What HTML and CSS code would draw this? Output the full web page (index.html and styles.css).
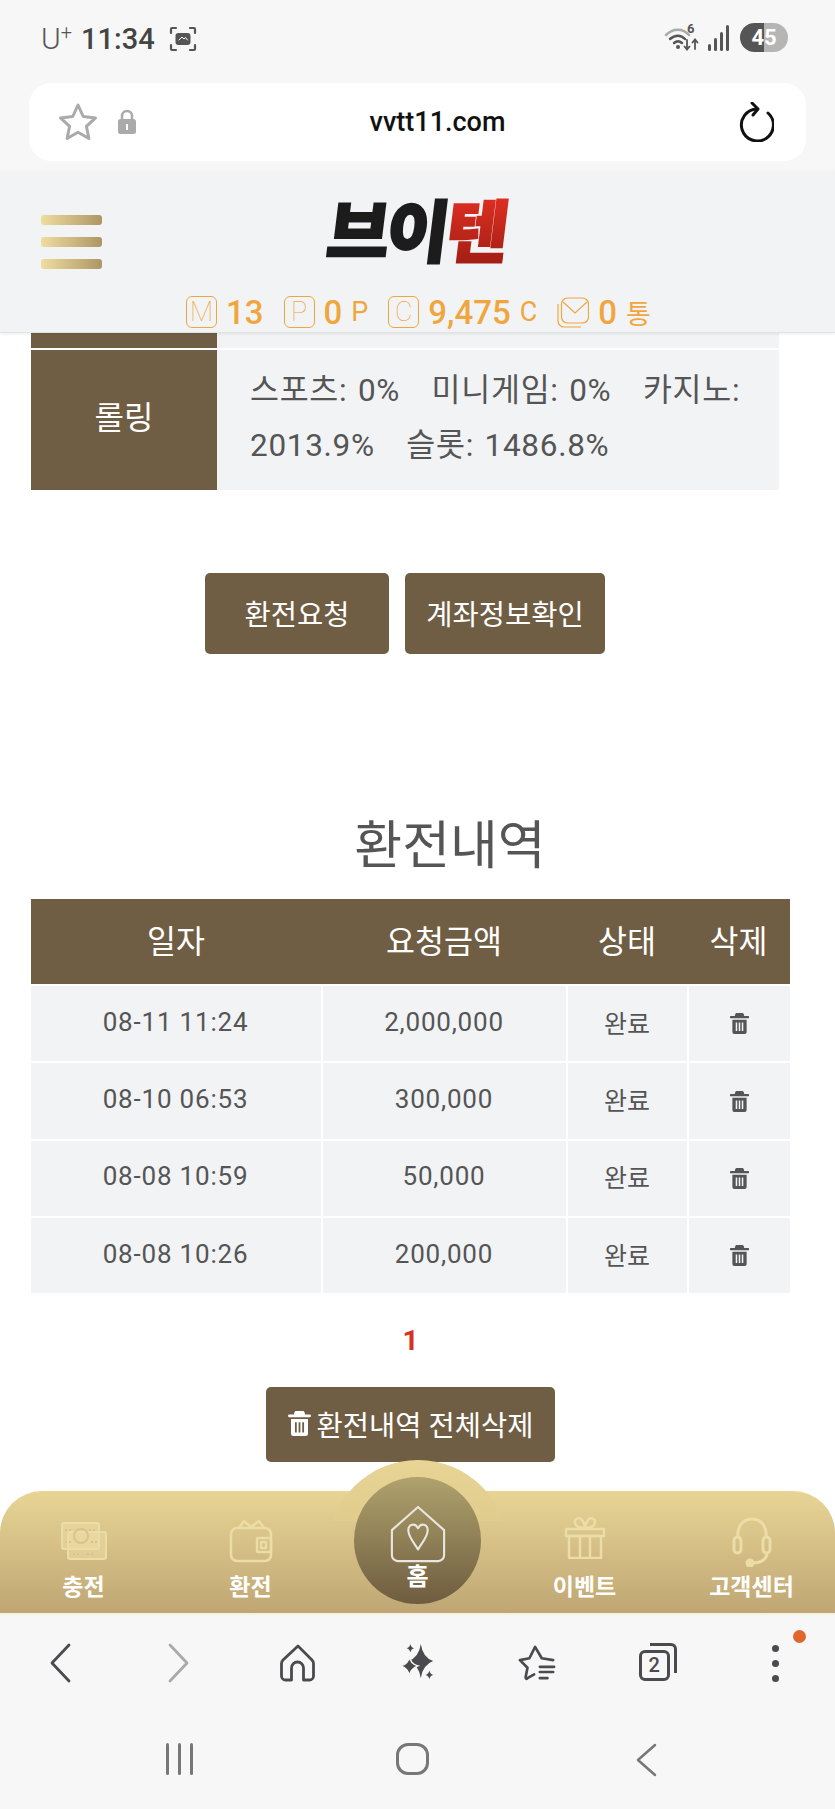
FILE: index.html
```html
<!DOCTYPE html>
<html lang="ko">
<head>
  <meta charset="UTF-8" />
  <title>브이텐 | 환전</title>
  <link rel="stylesheet" href="styles.css">
</head>
<body>

  <div class="statusbar">
    <div class="status-left">
      <span class="carrier">U<sup>+</sup></span>
      <span class="clock">11:34</span>
      <svg class="shot" viewBox="0 0 28 26" fill="none" stroke="#555" stroke-width="2.200" stroke-linecap="round">
        <path d="M2 7V3a1 1 0 0 1 1-1h4M21 2h4a1 1 0 0 1 1 1v4M26 19v4a1 1 0 0 1-1 1h-4M7 24H3a1 1 0 0 1-1-1v-4"/>
        <rect x="6.500" y="7" width="15" height="12" rx="3" fill="#555" stroke="none"/>
        <path d="M10 14l3-3 2 2 1.500-1.500 2 2.500" stroke="#fff" stroke-width="1"/>
      </svg>
    </div>
    <div class="status-right">
      <svg class="wifi" viewBox="0 0 36 26" fill="none" stroke-linecap="round">
        <path d="M2 10c7-7 17-7 23 0" stroke="#aaa" stroke-width="2.500"/>
        <path d="M6 14c5-4.500 11-4.500 15 0" stroke="#555" stroke-width="2.500"/>
        <path d="M10 18c3-2.500 5-2.500 8 0" stroke="#555" stroke-width="2.500"/>
        <circle cx="14" cy="22" r="2" fill="#555"/>
        <path d="M23 15v9M20.500 21.500l2.500 3 2.500-3M31 24v-9M28.500 17.500l2.500-3 2.500 3" stroke="#555" stroke-width="1.800"/>
      </svg>
      <span class="wifi-six">6</span>
      <svg class="signal" viewBox="0 0 22 26" fill="#555">
        <rect x="0" y="19" width="3" height="7" rx="1.500"/>
        <rect x="6" y="13" width="3" height="13" rx="1.500"/>
        <rect x="12" y="7" width="3" height="19" rx="1.500"/>
        <rect x="18" y="0" width="3" height="26" rx="1.500"/>
      </svg>
      <span class="battery">45</span>
    </div>
  </div>

  <div class="urlbar-wrap">
    <div class="urlbar">
      <svg class="url-star" viewBox="0 0 40 40" fill="none" stroke="#aaa" stroke-width="3" stroke-linejoin="round">
        <path d="M20 3l5.200 11.500 12.300 1.400-9.100 8.400 2.500 12.200L20 30.300 9.100 36.500l2.500-12.200-9.100-8.400 12.300-1.400z"/>
      </svg>
      <svg class="url-lock" viewBox="0 0 20 26" fill="#aaa">
        <path d="M5 11V7a5 5 0 0 1 10 0v4" fill="none" stroke="#aaa" stroke-width="2.500"/>
        <rect x="1" y="10" width="18" height="15" rx="2.500"/>
        <rect x="9" y="15" width="2" height="6" fill="#fff"/>
      </svg>
      <span class="url-text">vvtt11.com</span>
      <svg class="url-reload" viewBox="0 0 36 40" fill="none" stroke="#111" stroke-width="3" stroke-linecap="round" stroke-linejoin="round">
        <path d="M19 7A16 16 0 1 0 30 11"/>
        <path d="M14 1l6 6-5 6"/>
      </svg>
    </div>
  </div>

  <div class="header">
    <div class="header-top">
      <div class="burger"><i></i><i></i><i></i></div>
      <div class="logo">브이<span>텐</span></div>
    </div>
    <div class="stats">
      <span class="stat-box">M</span><b class="stat-num">13</b>
      <span class="stat-box stat-gap">P</span><b class="stat-num">0</b><span class="stat-unit">P</span>
      <span class="stat-box stat-gap">C</span><b class="stat-num">9,475</b><span class="stat-unit">C</span>
      <svg class="stat-mail" viewBox="0 0 32 32" fill="none" stroke="#f0a63f" stroke-width="1.200">
        <rect x="4.500" y="2" width="27" height="25" rx="6"/>
        <path d="M6 6l12 11L30 6"/>
        <path d="M1 8v17a6 6 0 0 0 6 6h17"/>
      </svg>
      <b class="stat-num">0</b><span class="stat-unit">통</span>
    </div>
  </div>

  <div class="main">
    <table class="info">
      <tr class="info-cut"><th></th><td></td></tr>
      <tr>
        <th>롤링</th>
        <td>스포츠: 0% &nbsp; 미니게임: 0% &nbsp; 카지노: 2013.9% &nbsp; 슬롯: 1486.8%</td>
      </tr>
    </table>

    <div class="actions">
      <a class="btn btn-request">환전요청</a>
      <a class="btn btn-account">계좌정보확인</a>
    </div>

    <h2>환전내역</h2>

    <table class="history">
      <thead>
        <tr><th class="c-date">일자</th><th class="c-amount">요청금액</th><th class="c-state">상태</th><th class="c-del">삭제</th></tr>
      </thead>
      <tbody>
        <tr>
          <td>08-11 11:24</td><td>2,000,000</td><td class="state">완료</td>
          <td><svg class="trash" viewBox="0 0 20 22"><use href="#trash"/></svg></td>
        </tr>
        <tr>
          <td>08-10 06:53</td><td>300,000</td><td class="state">완료</td>
          <td><svg class="trash" viewBox="0 0 20 22"><use href="#trash"/></svg></td>
        </tr>
        <tr>
          <td>08-08 10:59</td><td>50,000</td><td class="state">완료</td>
          <td><svg class="trash" viewBox="0 0 20 22"><use href="#trash"/></svg></td>
        </tr>
        <tr>
          <td>08-08 10:26</td><td>200,000</td><td class="state">완료</td>
          <td><svg class="trash" viewBox="0 0 20 22"><use href="#trash"/></svg></td>
        </tr>
      </tbody>
    </table>

    <div class="pager">1</div>

    <a class="btn btn-clear">
      <svg class="trash-white" viewBox="0 0 20 22"><use href="#trash"/></svg>
      환전내역 전체삭제
    </a>
  </div>

  <div class="tabbar">
    <div class="tab-bump"></div>
    <div class="tab">
      <svg class="icon-money" viewBox="0 0 46 38" fill="none" stroke="#ecdca6" stroke-width="2">
        <rect x="1" y="1" width="37" height="26" rx="2" fill="#ecdca6" fill-opacity="0.55"/>
        <rect x="7" y="10" width="38" height="27" rx="2" fill="#ecdca6" fill-opacity="0.55"/>
        <circle cx="20" cy="14" r="7" stroke="#d8c488"/>
        <path d="M4 8h6M28 8h6M4 20h6M30 20h6M12 32h7M26 32h8" stroke="#d8c488" stroke-dasharray="2 2"/>
      </svg>
      <span>충전</span>
    </div>
    <div class="tab">
      <svg class="icon-wallet" viewBox="0 0 44 44" fill="none" stroke="#ecdca6" stroke-width="2.500" stroke-linejoin="round">
        <path d="M10 9l5-7 7 6 8-6 5 7"/>
        <rect x="2" y="9" width="40" height="33" rx="6"/>
        <rect x="28" y="19" width="14" height="14" rx="1"/>
        <rect x="32" y="23" width="5" height="6"/>
      </svg>
      <span>환전</span>
    </div>
    <div class="tab tab-home">
      <div class="home-circle">
        <svg class="home-icon" viewBox="0 0 58 60" fill="none" stroke="#e9e6de" stroke-width="2.200" stroke-linejoin="round">
          <path d="M29 2L56 26v26a6 6 0 0 1-6 6H8a6 6 0 0 1-6-6V26z"/>
          <path d="M29 46C25 39 19 33 19 26c0-6 7-8 10-2 3-6 10-4 10 2 0 7-6 13-10 20z"/>
        </svg>
        <span>홈</span>
      </div>
    </div>
    <div class="tab">
      <svg class="icon-gift" viewBox="0 0 42 42" fill="none" stroke="#ecdca6" stroke-width="2.500" stroke-linejoin="round">
        <path d="M21 11c-6 0-10-2-10-6s5-5 7-2 3 5 3 8c0-3 1-5 3-8s7-2 7 2-4 6-10 6z"/>
        <rect x="2" y="12" width="38" height="7"/>
        <rect x="5" y="19" width="32" height="22"/>
        <path d="M16 19v22M26 19v22"/>
      </svg>
      <span>이벤트</span>
    </div>
    <div class="tab">
      <svg class="icon-headset" viewBox="0 0 40 50" fill="none" stroke="#ecdca6" stroke-width="3" stroke-linecap="round">
        <path d="M6 20C5 8 12 2 20 2s15 6 14 18"/>
        <rect x="2" y="20" width="7" height="16" rx="3.500"/>
        <rect x="31" y="20" width="7" height="16" rx="3.500"/>
        <path d="M35 36c0 6-6 10-14 10"/>
        <circle cx="18" cy="46" r="3" fill="#ecdca6"/>
      </svg>
      <span>고객센터</span>
    </div>
  </div>

  <div class="browserbar">
    <div class="tool">
      <svg class="tool-arrow" viewBox="0 0 22 40" fill="none" stroke="#4a4a4f" stroke-width="2.800" stroke-linecap="round" stroke-linejoin="round"><path d="M20 2L3 20l17 18"/></svg>
    </div>
    <div class="tool">
      <svg class="tool-arrow" viewBox="0 0 22 40" fill="none" stroke="#aaa" stroke-width="2.800" stroke-linecap="round" stroke-linejoin="round"><path d="M2 2l17 18L2 38"/></svg>
    </div>
    <div class="tool">
      <svg class="tool-icon" viewBox="0 0 36 38" fill="none" stroke="#4a4a4f" stroke-width="2.800" stroke-linejoin="round">
        <path d="M18 2L3 16c-1 1-1.500 2-1.500 3.500V32a4 4 0 0 0 4 4h6V24a6 6 0 0 1 12 0v12h6a4 4 0 0 0 4-4V19.500c0-1.500-.5-2.500-1.500-3.500z"/>
      </svg>
    </div>
    <div class="tool">
      <svg class="tool-icon" viewBox="0 0 36 40" fill="#4a4a4f">
        <path d="M22 0Q24 14 35 18 24 22 22 36 20 22 9 18 20 14 22 0z"/>
        <path d="M10 13Q11 21 19 23 11 26 10 34 9 26 1 23 9 21 10 13z" stroke="#f7f7f7" stroke-width="1.500"/>
        <path d="M11 0q.6 3.500 4 4.500-3.400 1-4 4.500-.6-3.500-4-4.500 3.400-1 4-4.500zM31 28q.6 3.500 4 4.500-3.400 1-4 4.500-.6-3.500-4-4.500 3.400-1 4-4.500z"/>
      </svg>
    </div>
    <div class="tool">
      <svg class="tool-icon" viewBox="0 0 40 38" fill="none" stroke="#4a4a4f" stroke-width="2.800" stroke-linecap="round" stroke-linejoin="round">
        <path d="M37 16L25 14 18 2 12 14 2 16l8 8-2 10c0 2 1 2 2 1l7-4"/>
        <path d="M23 23H38M23 28.500H37M23 35H31"/>
      </svg>
    </div>
    <div class="tool">
      <div class="tabs-count">
        <span>2</span>
      </div>
    </div>
    <div class="tool tool-more">
      <i></i><i></i><i></i>
      <b class="more-dot"></b>
    </div>
  </div>

  <div class="androidbar">
    <div class="nav-btn"><div class="nav-recent"><i></i><i></i><i></i></div></div>
    <div class="nav-btn"><div class="nav-home"></div></div>
    <div class="nav-btn">
      <svg class="nav-back" viewBox="0 0 22 34" fill="none" stroke="#777" stroke-width="2.500" stroke-linecap="round" stroke-linejoin="round"><path d="M20 2L3 17l17 15"/></svg>
    </div>
  </div>

  <svg class="defs" width="0" height="0">
    <symbol id="trash" viewBox="0 0 20 22">
      <path fill-rule="evenodd" d="M7 0h6a1.500 1.500 0 0 1 1.400 1L15 3h4a1 1 0 0 1 0 2.500H1A1 1 0 0 1 1 3h4l.6-2A1.500 1.500 0 0 1 7 0zM2.500 7h15v13a2 2 0 0 1-2 2h-11a2 2 0 0 1-2-2zM6 10v9h1.600v-9zM9.200 10v9h1.600v-9zM12.400 10v9H14v-9z"/>
    </symbol>
  </svg>

</body>
</html>
```

FILE: styles.css
```css
body {
  font-family: Roboto, 'Noto Sans CJK KR', sans-serif;
  background: #fff;
  color: #555;
  margin: 0;
  padding: 0;
  display: flex;
  flex-direction: column;
  height: 100vh;
  overflow: hidden;
}

.defs {
  position: absolute;
}

/* phone status bar */
.statusbar {
  background: #f7f7f7;
  height: 83px;
  flex: none;
  display: flex;
  justify-content: space-between;
  padding: 23px 47px 0 41px;
  box-sizing: border-box;
}

.status-left, .status-right {
  display: flex;
  align-items: flex-start;
}

.carrier {
  font-size: 30px;
  font-weight: 300;
  line-height: 32px;
  color: #555;
}

.carrier sup {
  font-size: 20px;
  line-height: 0;
  vertical-align: 10px;
}

.clock {
  font-size: 29px;
  font-weight: 500;
  line-height: 32px;
  margin-left: 9px;
  color: #444;
}

.shot {
  width: 28px;
  height: 26px;
  margin: 3px 0 0 14px;
}

.status-right {
  position: relative;
}

.wifi {
  width: 36px;
  height: 26px;
  margin-top: 2px;
}

.wifi-six {
  position: absolute;
  left: 23px;
  top: -2px;
  font-size: 13px;
  font-weight: 700;
  color: #555;
}

.signal {
  width: 22px;
  height: 26px;
  margin: 2px 0 0 8px;
}

.battery {
  width: 48px;
  height: 29px;
  margin-left: 10px;
  border-radius: 15px;
  background: linear-gradient(to right, #555 50%, #b5b5b5 50%);
  color: #fff;
  font-size: 22px;
  font-weight: 700;
  line-height: 29px;
  text-align: center;
}

/* browser url bar */
.urlbar-wrap {
  background: #f7f7f7;
  height: 88px;
  flex: none;
  padding: 0 29px;
}

.urlbar {
  height: 78px;
  background: #fff;
  border-radius: 22px;
  display: flex;
  align-items: center;
  position: relative;
  padding: 0 32px 0 29px;
}

.url-star {
  width: 40px;
  height: 40px;
}

.url-lock {
  width: 20px;
  height: 26px;
  margin-left: 19px;
}

.url-text {
  flex: 1;
  text-align: center;
  font-size: 27px;
  font-weight: 500;
  color: #111;
}

.url-reload {
  width: 36px;
  height: 40px;
}

/* site header */
.header {
  background: #f2f3f5;
  height: 162px;
  flex: none;
  border-bottom: 1px solid #e2e3e5;
  box-sizing: border-box;
  position: relative;
  box-shadow: 0 1px 3px rgba(0, 0, 0, 0.08);
}

.header-top {
  height: 125px;
  position: relative;
  display: flex;
  justify-content: center;
}

.burger {
  position: absolute;
  left: 41px;
  top: 44px;
  width: 61px;
  display: flex;
  flex-direction: column;
  gap: 12px;
}

.burger i {
  display: block;
  height: 10px;
  border-radius: 3px;
  background: linear-gradient(to right, #efdd9f, #ad9665);
}

.logo {
  font-family: 'Noto Sans CJK KR', sans-serif;
  font-size: 68px;
  font-weight: 900;
  color: #1c1c1c;
  -webkit-text-stroke: 2px #1c1c1c;
  line-height: 59px;
  height: 59px;
  margin-top: 27px;
  letter-spacing: -3px;
  transform: skewX(-7deg);
}

.logo span {
  background: linear-gradient(#ee3325, #971b12);
  -webkit-background-clip: text;
  background-clip: text;
  color: transparent;
  -webkit-text-stroke: 2px transparent;
}

.stats {
  display: flex;
  align-items: center;
  padding-left: 186px;
  color: #f0a63f;
  height: 32px;
}

.stat-box {
  width: 29px;
  height: 30px;
  border: 1px solid #f0a63f;
  border-radius: 6px;
  font-size: 27px;
  font-weight: 100;
  line-height: 30px;
  text-align: center;
}

.stat-gap {
  margin-left: 20px;
}

.stat-num {
  font-size: 33px;
  font-weight: 500;
  margin-left: 9px;
}

.stat-unit {
  font-size: 27px;
  margin-left: 9px;
}

.stat-mail {
  width: 32px;
  height: 32px;
  margin-left: 20px;
}

/* page content */
.main {
  flex: 1;
  min-height: 0;
  display: flex;
  flex-direction: column;
  align-items: center;
}

table {
  border-collapse: collapse;
}

.info {
  width: 748px;
  margin: 0 25px 0 0;
  table-layout: fixed;
}

.info th {
  width: 186px;
  background: #6f5e44;
  color: #fff;
  font-size: 32px;
  font-weight: 400;
  padding: 0 0 10px 0;
  border-bottom: 2px solid #fff;
}

.info td {
  background: #f2f3f5;
  font-size: 31.500px;
  letter-spacing: 0.7px;
  word-spacing: 2px;
  line-height: 55px;
  padding: 13px 32px 17px 33px;
  border-bottom: 2px solid #fff;
}

.info tr:last-child th, .info tr:last-child td {
  border-bottom: none;
}

.info-cut th, .info-cut td {
  padding: 0;
  height: 15px;
  line-height: 0;
}

.actions {
  display: flex;
  gap: 16px;
  margin: 83px 25px 0 0;
}

.btn {
  display: flex;
  align-items: center;
  justify-content: center;
  background: #6f5e44;
  color: #fff;
  font-size: 28.500px;
  height: 81px;
  border-radius: 5px;
  box-sizing: border-box;
  padding-bottom: 2px;
}

.btn-request {
  width: 184px;
}

.btn-account {
  width: 200px;
}

h2 {
  font-size: 52px;
  font-weight: 400;
  line-height: 60px;
  color: #555;
  margin: 163px 0 22px 65px;
}

.history {
  width: 759px;
  table-layout: fixed;
  margin-right: 15px;
}

.history th {
  background: #6f5e44;
  color: #fff;
  font-size: 31.500px;
  font-weight: 400;
  height: 79px;
  padding: 0 0 6px 0;
}

.history td {
  background: #f2f3f5;
  border: 2px solid #fff;
  text-align: center;
  font-size: 26px;
  letter-spacing: 0.8px;
  height: 71.300px;
  padding: 0 0 4px 0;
}

.history td.state {
  font-size: 25px;
  letter-spacing: 0;
}

.history td:first-child {
  border-left: none;
}

.history td:last-child {
  border-right: none;
}

.c-date {
  width: 291px;
}

.c-amount {
  width: 245px;
}

.c-state {
  width: 121px;
}

.trash {
  width: 19px;
  height: 21px;
  fill: #555;
  vertical-align: middle;
}

.pager {
  color: #d9301f;
  font-size: 28px;
  font-weight: 700;
  line-height: 40px;
  margin: 26px 0 0 0;
  padding-right: 14px;
}

.btn-clear {
  width: 289px;
  height: 75px;
  margin: 26px 14px 0 0;
  gap: 6px;
}

.trash-white {
  width: 23px;
  height: 25px;
  fill: #fff;
}

/* gold bottom menu */
.tabbar {
  height: 122px;
  flex: none;
  position: relative;
  display: grid;
  grid-template-columns: 167px 167px 167px 167px 167px;
  background: linear-gradient(#e8d595, #bfa674);
  border-radius: 42px 42px 0 0;
}

.tab-bump {
  position: absolute;
  left: 328px;
  top: -31px;
  width: 180px;
  height: 153px;
  border-radius: 90px 90px 0 0;
  background: linear-gradient(#e8d595, #e0cc8d 40%, transparent 40%);
}

.tab {
  position: relative;
  display: flex;
  flex-direction: column;
  align-items: center;
  padding-top: 28px;
  box-sizing: border-box;
  height: 122px;
}

.tab span {
  position: absolute;
  bottom: 10px;
  color: #fff;
  font-size: 23px;
  font-weight: 700;
  line-height: 30px;
  white-space: nowrap;
}

.icon-money {
  width: 46px;
  height: 38px;
  margin-top: 3px;
}

.icon-wallet {
  width: 44px;
  height: 44px;
}

.icon-gift {
  width: 42px;
  height: 42px;
  margin-top: -2px;
}

.icon-headset {
  width: 40px;
  height: 50px;
  margin-top: -2px;
}

.tab-home {
  padding-top: 0;
}

.home-circle {
  position: absolute;
  left: 20px;
  top: -14px;
  width: 127px;
  height: 127px;
  border-radius: 50%;
  background: linear-gradient(#b0a26d, #6e5c3f);
  display: flex;
  flex-direction: column;
  align-items: center;
}

.home-icon {
  width: 58px;
  height: 58px;
  margin-top: 28px;
}

.tab-home .home-circle span {
  bottom: 12px;
  font-size: 24px;
}

/* browser toolbar */
.browserbar {
  height: 100px;
  flex: none;
  background: #f7f7f7;
  display: grid;
  grid-template-columns: repeat(7, 1fr);
  border-top: 2px solid #f4f0e6;
  box-sizing: border-box;
}

.tool {
  display: flex;
  align-items: center;
  justify-content: center;
  position: relative;
  padding-bottom: 2px;
}

.tool-arrow {
  width: 22px;
  height: 40px;
}

.tool-icon {
  width: 38px;
  height: 38px;
}

.tabs-count {
  position: relative;
  width: 25px;
  height: 25px;
  border: 3px solid #4a4a4f;
  border-radius: 6px;
  text-align: center;
  font-size: 20px;
  font-weight: 500;
  line-height: 25px;
  color: #4a4a4f;
  margin: 4px 4px 0 0;
}

.tabs-count:after {
  content: "";
  position: absolute;
  top: -10px;
  right: -10px;
  width: 24px;
  height: 27px;
  border-top: 3px solid #4a4a4f;
  border-right: 3px solid #4a4a4f;
  border-radius: 0 6px 0 0;
}

.tool-more {
  flex-direction: column;
  gap: 8px;
}

.tool-more i {
  display: block;
  width: 7px;
  height: 7px;
  border-radius: 50%;
  background: #4a4a4f;
}

.more-dot {
  position: absolute;
  left: 77px;
  top: 15px;
  width: 13px;
  height: 13px;
  border-radius: 50%;
  background: #e0662c;
}

/* android nav */
.androidbar {
  height: 96px;
  flex: none;
  background: #f7f7f7;
  display: grid;
  grid-template-columns: repeat(3, 233px);
  padding: 0 0 0 63px;
}

.nav-btn {
  display: flex;
  align-items: flex-start;
  justify-content: center;
  padding-top: 30px;
}

.nav-recent {
  display: flex;
  gap: 9px;
}

.nav-recent i {
  display: block;
  width: 3px;
  height: 32px;
  background: #777;
  border-radius: 2px;
}

.nav-home {
  width: 27px;
  height: 26px;
  border: 3px solid #777;
  border-radius: 12px;
}

.nav-back {
  width: 22px;
  height: 34px;
}
```
